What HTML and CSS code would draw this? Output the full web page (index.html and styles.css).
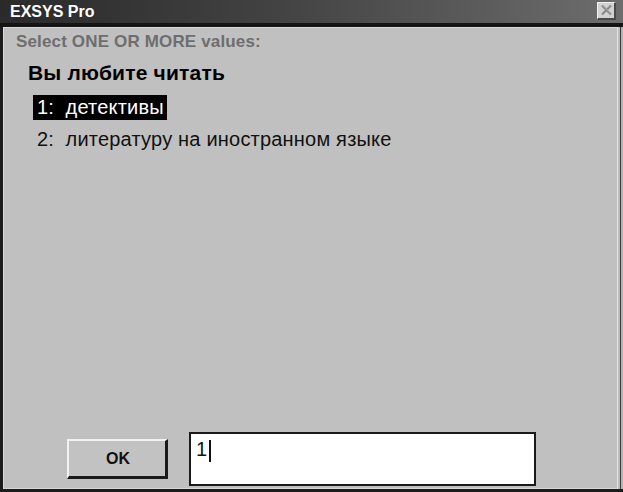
FILE: index.html
```html
<!DOCTYPE html>
<html lang="ru">
<head>
<meta charset="utf-8">
<title>EXSYS Pro</title>
<link rel="stylesheet" href="styles.css">
</head>
<body>
<div class="window">
  <div class="titlebar">
    <span class="title">EXSYS Pro</span>
    <span class="close">
      <svg width="15" height="14" viewBox="0 0 15 14">
        <path d="M3 2.5 L12 11.5 M12 2.5 L3 11.5" stroke="#8a8a8a" stroke-width="2.2" fill="none"/>
        <path d="M4 2.5 L12.5 11" stroke="#b8b8b8" stroke-width="0.8" fill="none"/>
      </svg>
    </span>
  </div>
  <div class="frame">
    <div class="client">
      <div class="prompt">Select ONE OR MORE values:</div>
      <div class="question">Вы любите читать</div>
      <ul class="options">
        <li class="opt selected">1:  детективы</li>
        <li class="opt">2:  литературу на иностранном языке</li>
      </ul>
      <div class="actions">
        <button class="ok">OK</button>
        <div class="entry"><span class="value">1</span><span class="caret"></span></div>
      </div>
    </div>
    <div class="edge"></div>
  </div>
</div>
</body>
</html>
```
FILE: styles.css
```css
html, body {
  margin: 0;
  padding: 0;
  background: #1c1c1c;
}

.window {
  width: 623px;
  height: 492px;
  display: flex;
  flex-direction: column;
  background: #1c1c1c;
  font-family: "Liberation Sans", Arial, sans-serif;
}

.titlebar {
  height: 23px;
  flex: 0 0 23px;
  display: flex;
  align-items: center;
  justify-content: space-between;
  padding: 0 5px 0 10px;
  background: linear-gradient(to right, #2a2a2a 0%, #434343 45%, #6d6d6d 100%);
  border-bottom: 4px solid #141414;
}

.title {
  color: #ffffff;
  font-weight: bold;
  font-size: 16px;
  line-height: 23px;
}

.close {
  width: 19px;
  height: 18px;
  box-sizing: border-box;
  display: flex;
  align-items: center;
  justify-content: center;
  background: #d2d2d2;
  border-top: 1px solid #f2f2f2;
  border-left: 1px solid #f2f2f2;
  border-right: 2px solid #4a4a4a;
  border-bottom: 2px solid #4a4a4a;
  margin-top: -2px;
  margin-right: 2px;
}

.frame {
  flex: 1;
  display: flex;
  padding: 0 0 3px 3px;
  min-height: 0;
}

.client {
  flex: 1;
  display: flex;
  flex-direction: column;
  background: #c0c0c0;
  border-top: 1px solid #dadada;
  border-left: 1px solid #dadada;
  border-right: 1px solid #e4e4e4;
  border-bottom: 1px solid #d6d6d6;
}

.edge {
  width: 5px;
  background: linear-gradient(to right, #bdbdbd 0 2px, #3a3a3a 2px 3px, #b4b4b4 3px 5px);
}

.prompt {
  margin: 4px 0 0 12px;
  font-size: 17px;
  line-height: 20px;
  font-weight: bold;
  color: #6e6e6e;
  letter-spacing: 0.15px;
}

.question {
  margin: 10px 0 0 24px;
  font-size: 21px;
  line-height: 22px;
  font-weight: bold;
  color: #000;
  letter-spacing: 0.2px;
}

.options {
  list-style: none;
  margin: 11px 0 0 29px;
  padding: 0;
  display: flex;
  flex-direction: column;
  align-items: flex-start;
  gap: 7px;
}

.opt {
  font-size: 20px;
  line-height: 25px;
  padding: 0 3px 0 4px;
  white-space: pre;
  color: #111;
  letter-spacing: 0.2px;
}

.opt.selected {
  background: #000;
  color: #fff;
}

.actions {
  margin-top: auto;
  display: flex;
  align-items: center;
  gap: 21px;
  padding: 0 0 2px 63px;
}

.ok {
  width: 101px;
  height: 40px;
  box-sizing: border-box;
  background: #c2c2c2;
  border-top: 2px solid #f2f2f2;
  border-left: 2px solid #f2f2f2;
  border-right: 3px solid #1a1a1a;
  border-bottom: 3px solid #1a1a1a;
  font-family: "Liberation Sans", Arial, sans-serif;
  font-size: 16px;
  font-weight: bold;
  color: #111;
  padding: 0 0 0 2px;
}

.entry {
  width: 347px;
  height: 54px;
  box-sizing: border-box;
  background: #ffffff;
  border: 2px solid #1a1a1a;
  padding: 4px 0 0 5px;
  display: flex;
  align-items: flex-start;
}

.value {
  font-size: 20px;
  line-height: 23px;
  color: #111;
}

.caret {
  width: 2px;
  height: 22px;
  margin: 2px 0 0 2px;
  background: #111;
}
```
